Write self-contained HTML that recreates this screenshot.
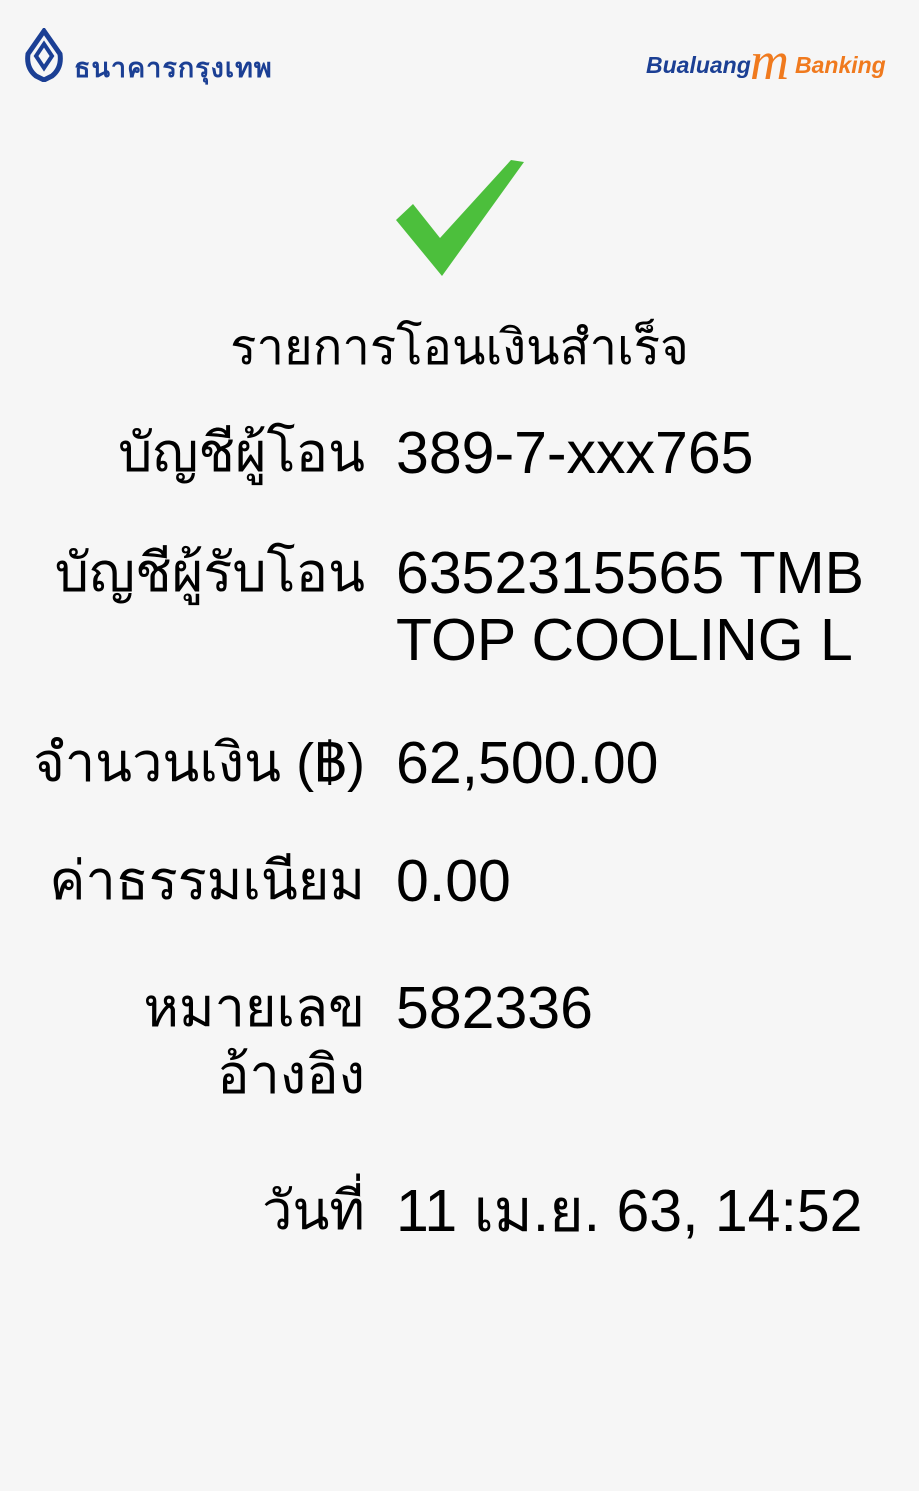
<!DOCTYPE html>
<html><head><meta charset="utf-8"><style>
body{margin:0;width:919px;height:1491px;background:#f6f6f6;position:relative;overflow:hidden;font-family:"Liberation Sans",sans-serif;color:#000}
.a{position:absolute;white-space:nowrap}
.l{right:554px;font-size:54px;text-align:right;line-height:67px}
.v{left:396px;font-size:59px;line-height:67px}
</style></head><body>
<svg class="a" style="left:24px;top:28px" width="40" height="54" viewBox="0 0 40 54"><path d="M20 3 L36 26 Q38 40 28 48 L20 52 L12 48 Q2 40 4 26 Z" fill="none" stroke="#1b3f94" stroke-width="5"/><path d="M20 16 L28 28 L20 40 L12 28Z" fill="none" stroke="#1b3f94" stroke-width="4"/></svg>
<div class="a" style="left:74px;top:46px;font-size:27px;font-weight:bold;color:#1b3f94;letter-spacing:1px">ธนาคารกรุงเทพ</div>
<div class="a" style="left:646px;top:52px;font-size:23px;font-weight:bold;font-style:italic;color:#1b3f94">Bualuang</div>
<div class="a" style="left:750px;top:30px;font-size:54px;font-style:italic;color:#f07a1e;font-family:'Liberation Serif',serif;letter-spacing:-3px">m</div>
<div class="a" style="left:795px;top:52px;font-size:23px;font-weight:bold;font-style:italic;color:#f07a1e">Banking</div>
<svg class="a" style="left:393px;top:158px" width="134" height="120"><polygon points="3,62 20,46 47,80 118,2 131,4 49,118" fill="#4cbf3c"/></svg>
<div class="a" style="left:0;width:919px;text-align:center;top:308px;font-size:49px">รายการโอนเงินสำเร็จ</div>
<div class="a l" style="top:420px">บัญชีผู้โอน</div><div class="a v" style="top:420px">389-7-xxx765</div>
<div class="a l" style="top:540px">บัญชีผู้รับโอน</div><div class="a v" style="top:540px">6352315565 TMB<br>TOP COOLING L</div>
<div class="a l" style="top:730px">จำนวนเงิน (฿)</div><div class="a v" style="top:730px">62,500.00</div>
<div class="a l" style="top:848px">ค่าธรรมเนียม</div><div class="a v" style="top:848px">0.00</div>
<div class="a l" style="top:975px">หมายเลข<br>อ้างอิง</div><div class="a v" style="top:975px">582336</div>
<div class="a l" style="top:1178px">วันที่</div><div class="a v" style="top:1178px">11 เม.ย. 63, 14:52</div>
</body></html>
